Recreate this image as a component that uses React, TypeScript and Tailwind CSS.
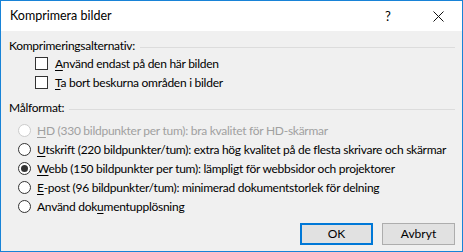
import React from "react";

const font = { fontFamily: 'Lato, "Noto Sans", sans-serif' };

function U({ children }: { children: React.ReactNode }) {
  return <span className="underline underline-offset-2">{children}</span>;
}

function GroupHeader({ label }: { label: string }) {
  return (
    <div className="flex items-center h-4 pl-2 pr-[7px]">
      <span className="whitespace-nowrap">{label}</span>
      <div className="flex-1 h-px bg-[#dcdcdc] ml-[5px] mt-[2px]" />
    </div>
  );
}

function Checkbox({ children }: { children: React.ReactNode }) {
  return (
    <div className="flex items-center h-[19px] pl-[34px]">
      <div className="w-[13px] h-[13px] shrink-0 border border-[#333333] bg-white" />
      <span className="ml-[7px] whitespace-nowrap">{children}</span>
    </div>
  );
}

function Radio({
  children,
  checked,
  disabled,
}: {
  children: React.ReactNode;
  checked?: boolean;
  disabled?: boolean;
}) {
  return (
    <div className={`flex items-center h-[19px] pl-[17px] ${disabled ? "text-[#a0a0a0]" : "text-black"}`}>
      <div
        className={`w-[13px] h-[13px] shrink-0 rounded-full border bg-white flex items-center justify-center ${
          disabled ? "border-[#cccccc]" : "border-[#333333]"
        }`}
      >
        {checked && <div className="w-[7px] h-[7px] rounded-full bg-[#333333]" />}
      </div>
      <span className="ml-[6px] whitespace-nowrap">{children}</span>
    </div>
  );
}

export default function App() {
  return (
    <div
      className="w-[463px] h-[252px] border border-[#1883d7] flex flex-col text-[12px] leading-4 text-black bg-[#f0f0f0] overflow-hidden"
      style={font}
    >
      <div className="h-[30px] bg-white flex items-center pl-[9px] text-[12.5px]">
        <span className="flex-1">Komprimera bilder</span>
        <span className="w-[20px] text-center mr-[35px] text-[13px]">?</span>
        <svg width="11" height="11" viewBox="0 0 11 11" className="mr-[18px]">
          <path d="M0.5 0.5 L10.5 10.5 M10.5 0.5 L0.5 10.5" stroke="#111" strokeWidth="1" />
        </svg>
      </div>
      <div className="flex-1 flex flex-col pt-[7px] tracking-[-0.27px]">
        <GroupHeader label="Komprimeringsalternativ:" />
        <div>
          <Checkbox>
            <U>A</U>nvänd endast på den här bilden
          </Checkbox>
          <Checkbox>
            <U>T</U>a bort beskurna områden i bilder
          </Checkbox>
        </div>
        <div className="mt-[8px]">
          <GroupHeader label="Målformat:" />
        </div>
        <div className="mt-[5px]">
          <Radio disabled>
            <U>H</U>D (330 bildpunkter per tum): bra kvalitet för HD-skärmar
          </Radio>
          <Radio>
            <U>U</U>tskrift (220 bildpunkter/tum): extra hög kvalitet på de flesta skrivare och skärmar
          </Radio>
          <Radio checked>
            <U>W</U>ebb (150 bildpunkter per tum): lämpligt för webbsidor och projektorer
          </Radio>
          <Radio>
            <U>E</U>-post (96 bildpunkter/tum): minimerad dokumentstorlek för delning
          </Radio>
          <Radio>
            Använd dok<U>u</U>mentupplösning
          </Radio>
        </div>
        <div className="flex justify-end gap-[9px] pr-[7px] mt-[7px] tracking-normal">
          <div className="w-[73px] h-[22px] border-2 border-[#0078d7] bg-[#e1e1e1] flex items-center justify-center">
            OK
          </div>
          <div className="w-[73px] h-[22px] border border-[#adadad] bg-[#e1e1e1] flex items-center justify-center">
            Avbryt
          </div>
        </div>
      </div>
    </div>
  );
}
